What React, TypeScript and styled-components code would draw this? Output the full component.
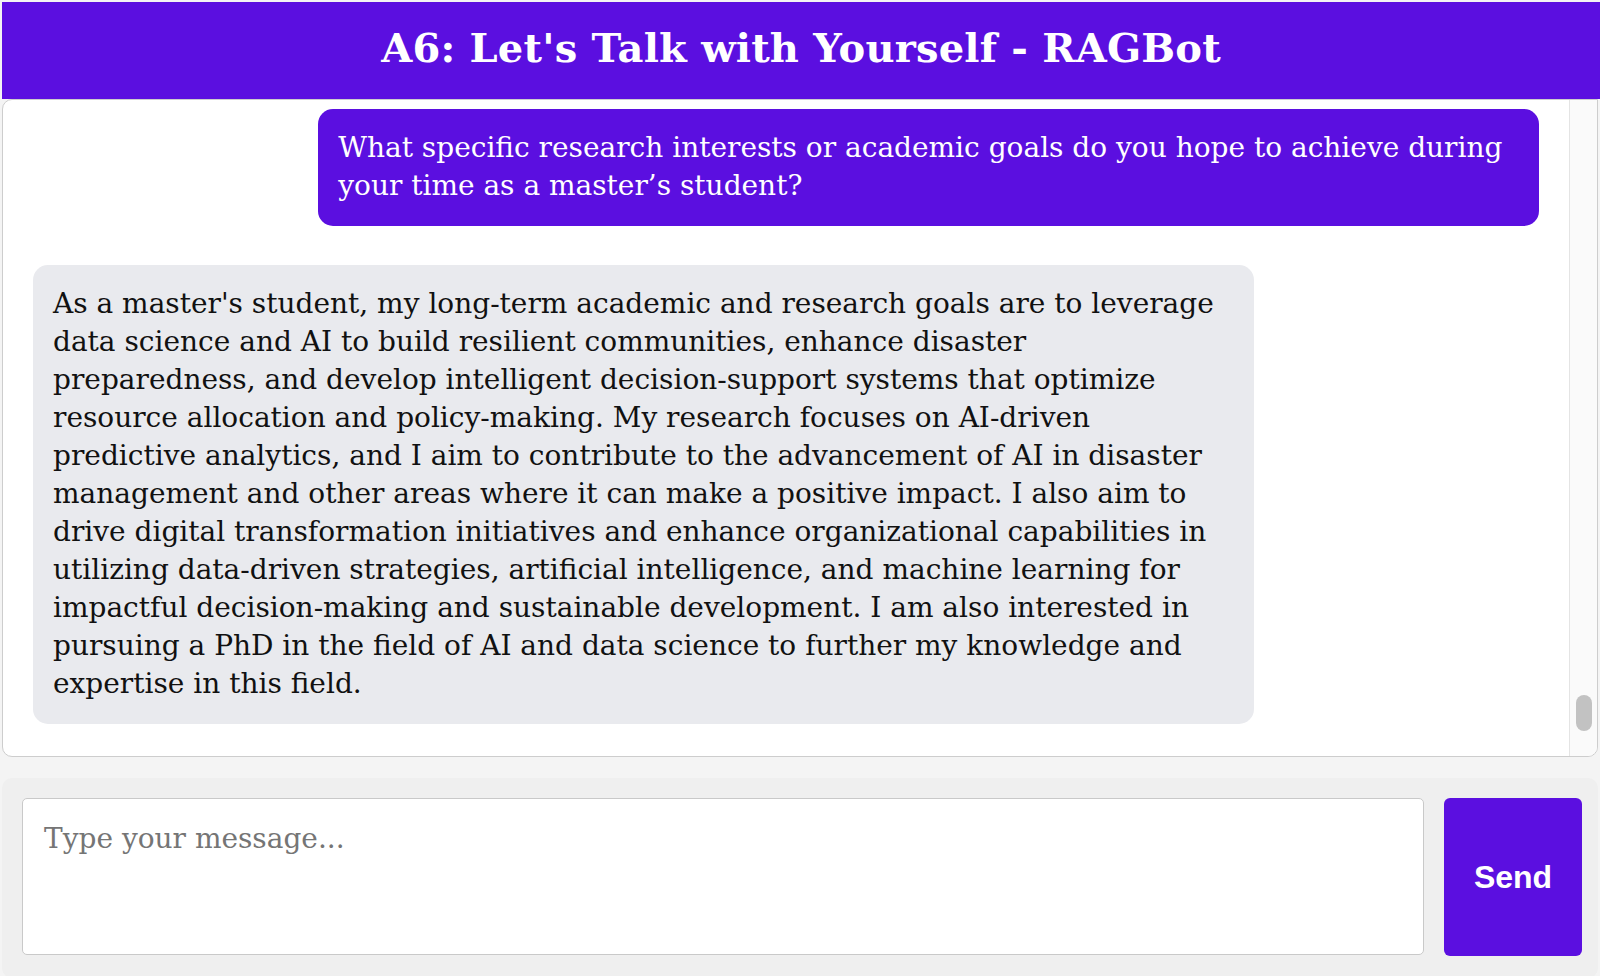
import React from "react";
import styled, { createGlobalStyle } from "styled-components";

const purple = "#5b0fe0";

const GlobalStyle = createGlobalStyle`
  html, body {
    margin: 0;
    padding: 0;
    background: #f4f4f4;
    font-family: "DejaVu Serif", "Liberation Serif", serif;
  }
  * { box-sizing: border-box; }
`;

const Page = styled.div`
  display: flex;
  flex-direction: column;
  height: 976px;
  padding: 2px 0 0 2px;
  overflow: hidden;
`;

const Header = styled.header`
  height: 97px;
  flex: none;
  background: ${purple};
  display: flex;
  align-items: center;
  justify-content: center;
  padding-bottom: 6px;
`;

const Title = styled.h1`
  margin: 0;
  color: #ffffff;
  font-family: "DejaVu Serif", serif;
  font-weight: 700;
  font-size: 40px;
  letter-spacing: 0.2px;
`;

const ChatBox = styled.div`
  height: 658px;
  flex: none;
  margin-right: 2px;
  background: #ffffff;
  border: 1px solid #cdcdcd;
  border-radius: 10px;
  border-top-right-radius: 0;
  overflow: hidden;
  display: flex;
`;

const ChatScroll = styled.div`
  flex: 1;
  min-width: 0;
  overflow-y: auto;
  scrollbar-width: none;
`;

const ScrollRail = styled.div`
  flex: none;
  width: 28px;
  background: #fafafa;
  border-left: 1px solid #e4e4e4;
  display: flex;
  flex-direction: column;
  justify-content: flex-end;
  align-items: center;
  padding-bottom: 25px;
`;

const ScrollThumb = styled.div`
  width: 16px;
  height: 36px;
  border-radius: 8px;
  background: #c2c2c2;
`;

const MessageList = styled.div`
  display: flex;
  flex-direction: column;
  gap: 39px;
  padding: 9px 20px 20px;
`;

const Bubble = styled.div<{ $user?: boolean }>`
  width: 80%;
  margin: 0 10px;
  align-self: ${(p) => (p.$user ? "flex-end" : "flex-start")};
  background: ${(p) => (p.$user ? purple : "#e9eaee")};
  color: ${(p) => (p.$user ? "#ffffff" : "#111111")};
  border-radius: 15px;
  padding: 20px 20px 21px 20px;
  font-size: 28px;
  line-height: 38px;
`;

const Line = styled.span`
  display: block;
  white-space: nowrap;
`;

const InputBar = styled.div`
  flex: none;
  margin: 21px 2px 0 0;
  height: 200px;
  background: #efefef;
  border-radius: 10px;
  display: flex;
  align-items: flex-start;
  gap: 20px;
  padding: 20px 16px 0 20px;
`;

const MessageInput = styled.textarea`
  flex: 1;
  height: 157px;
  resize: none;
  border: 1px solid #c9c9c9;
  border-radius: 5px;
  background: #ffffff;
  padding: 23px 21px;
  font-family: "DejaVu Serif", serif;
  font-size: 28px;
  color: #222;
  outline: none;

  &::placeholder {
    color: #757575;
  }
`;

const SendButton = styled.button`
  flex: none;
  width: 138px;
  height: 158px;
  border: none;
  border-radius: 6px;
  background: ${purple};
  color: #ffffff;
  font-family: "Liberation Sans", Arial, sans-serif;
  font-weight: 700;
  font-size: 32px;
  cursor: pointer;
`;

const userLines = [
  "What specific research interests or academic goals do you hope to achieve during",
  "your time as a master\u2019s student?",
];

const botLines = [
  "As a master's student, my long-term academic and research goals are to leverage",
  "data science and AI to build resilient communities, enhance disaster",
  "preparedness, and develop intelligent decision-support systems that optimize",
  "resource allocation and policy-making. My research focuses on AI-driven",
  "predictive analytics, and I aim to contribute to the advancement of AI in disaster",
  "management and other areas where it can make a positive impact. I also aim to",
  "drive digital transformation initiatives and enhance organizational capabilities in",
  "utilizing data-driven strategies, artificial intelligence, and machine learning for",
  "impactful decision-making and sustainable development. I am also interested in",
  "pursuing a PhD in the field of AI and data science to further my knowledge and",
  "expertise in this field.",
];

export default function App() {
  return (
    <>
      <GlobalStyle />
      <Page>
        <Header>
          <Title>A6: Let's Talk with Yourself - RAGBot</Title>
        </Header>
        <ChatBox>
          <ChatScroll>
            <MessageList>
              <Bubble $user>
                {userLines.map((l, i) => (
                  <Line key={i}>{l}</Line>
                ))}
              </Bubble>
              <Bubble>
                {botLines.map((l, i) => (
                  <Line key={i}>{l}</Line>
                ))}
              </Bubble>
            </MessageList>
          </ChatScroll>
          <ScrollRail>
            <ScrollThumb />
          </ScrollRail>
        </ChatBox>
        <InputBar>
          <MessageInput placeholder="Type your message..." />
          <SendButton>Send</SendButton>
        </InputBar>
      </Page>
    </>
  );
}
